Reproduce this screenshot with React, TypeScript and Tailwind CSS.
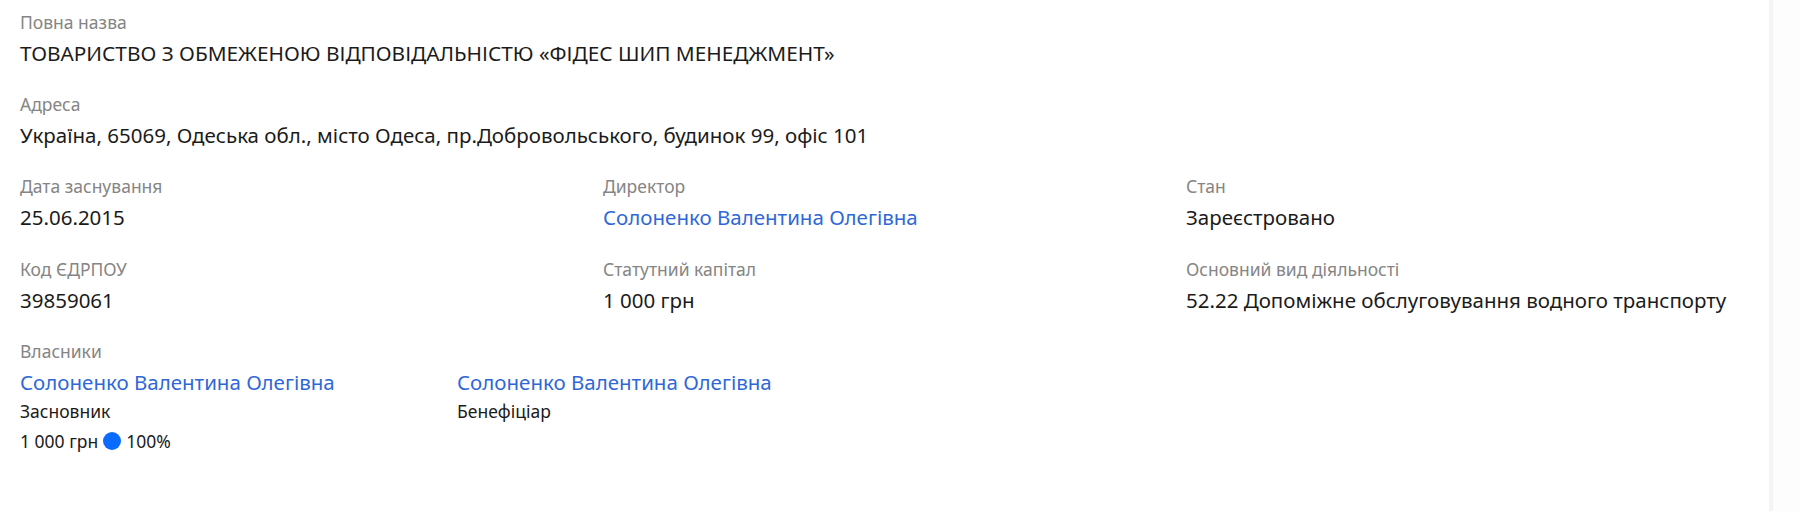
const font = { fontFamily: '"Segoe UI", "Noto Sans", "Open Sans", sans-serif' };

function Field({ label, children, big }: { label: string; children: React.ReactNode; big?: boolean }) {
  return (
    <div>
      <div className="text-[17.5px] leading-6 text-[#858585]">{label}</div>
      <div className={`mt-[5px] leading-7 text-[#1b1b1b] ${big ? 'text-[20.8px]' : 'text-[20.5px]'}`}>{children}</div>
    </div>
  );
}

function PersonLink({ name }: { name: string }) {
  return <a href="#" className="text-[#2f68d6] hover:underline">{name}</a>;
}

export default function App() {
  return (
    <div className="flex min-h-[511px] bg-white" style={font}>
      <div className="w-[1769px] shrink-0 px-5 pt-[10px] pb-10">
        <div className="flex flex-col gap-y-[25px]">
          <Field label="Повна назва" big>
            ТОВАРИСТВО З ОБМЕЖЕНОЮ ВІДПОВІДАЛЬНІСТЮ «ФІДЕС ШИП МЕНЕДЖМЕНТ»
          </Field>
          <Field label="Адреса">
            Україна, 65069, Одеська обл., місто Одеса, пр.Добровольського, будинок 99, офіс 101
          </Field>

          <div className="grid grid-cols-3 gap-x-5 gap-y-[26px]">
            <Field label="Дата заснування">25.06.2015</Field>
            <Field label="Директор">
              <PersonLink name="Солоненко Валентина Олегівна" />
            </Field>
            <Field label="Стан">Зареєстровано</Field>
            <Field label="Код ЄДРПОУ">39859061</Field>
            <Field label="Статутний капітал">1 000 грн</Field>
            <Field label="Основний вид діяльності">52.22 Допоміжне обслуговування водного транспорту</Field>
          </div>

          {/* Owners */}
          <div>
            <div className="text-[17.5px] leading-6 text-[#858585]">Власники</div>
            <div className="mt-[5px] flex gap-5">
              <div className="w-[417px]">
                <div className="text-[20.5px] leading-7">
                  <PersonLink name="Солоненко Валентина Олегівна" />
                </div>
                <div className="mt-[3px] text-[17.5px] leading-6 text-[#1b1b1b]">Засновник</div>
                <div className="mt-[6px] flex items-center gap-[5px] text-[17.5px] leading-6 text-[#1b1b1b]">
                  <span>1 000 грн</span>
                  <span className="inline-block h-[18px] w-[18px] rounded-full bg-[#0b6bff]" />
                  <span>100%</span>
                </div>
              </div>
              <div className="w-[417px]">
                <div className="text-[20.5px] leading-7">
                  <PersonLink name="Солоненко Валентина Олегівна" />
                </div>
                <div className="mt-[3px] text-[17.5px] leading-6 text-[#1b1b1b]">Бенефіціар</div>
              </div>
            </div>
          </div>
        </div>
      </div>
      <div className="w-1 shrink-0 bg-[#f4f4f4]" />
      <div className="flex-1 bg-[#fdfdfd]" />
    </div>
  );
}
